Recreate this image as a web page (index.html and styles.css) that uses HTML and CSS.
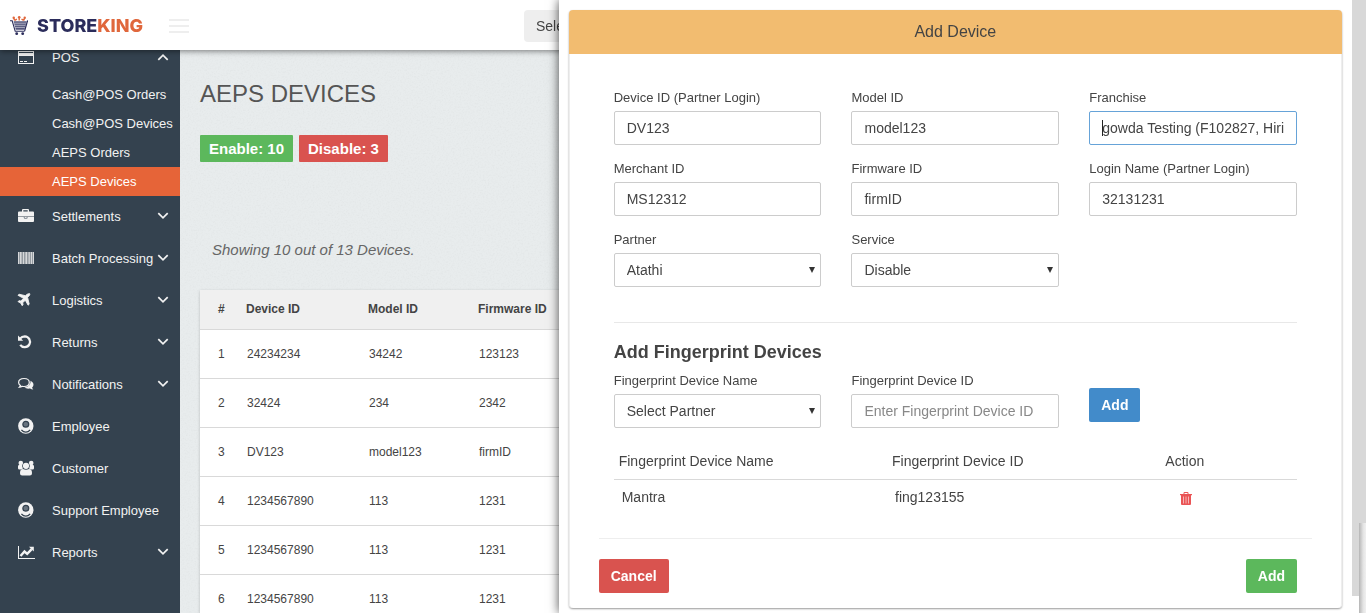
FILE: index.html
```html
<!DOCTYPE html>
<html lang="en">
<head>
<meta charset="utf-8">
<title>StoreKing - AEPS Devices</title>
<link rel="stylesheet" href="styles.css">
</head>
<body>
<svg class="sprite" aria-hidden="true">
  <symbol id="chevron" viewBox="0 0 12 8"><path d="M1.300 1.200L6 5.900l4.700-4.700" fill="none" stroke="currentColor" stroke-width="1.700"/></symbol>
  <symbol id="user" viewBox="0 0 16 16"><circle cx="7.800" cy="8" r="7.700"/><circle cx="7.800" cy="6.200" r="2.900" fill="#68737e" stroke="#34424f" stroke-width="1.300"/><path d="M3.400 11.800q1.900 2.300 4.400 2.300t4.400-2.300" fill="none" stroke="#34424f" stroke-width="1.300"/></symbol>
</svg>

<header class="topbar">
  <a class="brand" href="#" aria-label="StoreKing">
    <svg class="brand-cart" viewBox="0 0 18 20" aria-hidden="true">
      <path d="M4.700 4.600L3.700 2M4.700 4.400l2.200-1.200M9.200 4.400V1.500M13.700 4.600l1-2.600M13.700 4.400l-2.200-1.200" stroke="#e0673c" stroke-width="1.400"/>
      <circle cx="3.700" cy="1.800" r="1.200" fill="#e0673c"/><circle cx="9.200" cy="1.300" r="1.300" fill="#e0673c"/><circle cx="14.700" cy="1.800" r="1.200" fill="#e0673c"/>
      <path d="M0 4.800h2.200l3 10.500h9.500" fill="none" stroke="#2b2c5b" stroke-width="1.100"/>
      <path d="M3.600 5.300h13l-2.200 8.500H5.800z" fill="#55567c"/>
      <path d="M4 7.200h12.300M4.500 9.300h11.200M5 11.400h10.200" stroke="#c4c5d3" stroke-width=".8"/>
      <path d="M17.600 4.500l-3 10.500" stroke="#2b2c5b" stroke-width="1.200"/>
      <circle cx="6.700" cy="17.700" r="1.400" fill="#2b2c5b"/><circle cx="12.700" cy="17.700" r="1.400" fill="#2b2c5b"/>
    </svg>
    <span class="brand-name">STORE<span class="brand-accent">KING</span></span>
  </a>
  <button class="menu-toggle" type="button" aria-label="Toggle menu"><span></span><span></span><span></span></button>
  <button class="top-select" type="button">Select</button>
</header>

<nav class="sidebar">
  <ul class="nav">
    <li>
      <a class="nav-link" href="#"><svg class="nav-icon" viewBox="0 0 18 16"><path fill-rule="evenodd" d="M1 2h16v13H1zM2 3v1h14V3zM2 7v7h14V7zM3 12h3v1H3zM7 12h3v1H7z"/></svg><span>POS</span><svg class="nav-chevron open"><use href="#chevron"/></svg></a>
      <ul class="subnav">
        <li><a href="#">Cash@POS Orders</a></li>
        <li><a href="#">Cash@POS Devices</a></li>
        <li><a href="#">AEPS Orders</a></li>
        <li><a class="active" href="#">AEPS Devices</a></li>
      </ul>
    </li>
    <li><a class="nav-link" href="#"><svg class="nav-icon" viewBox="0 0 18 16"><path fill-rule="evenodd" d="M5 3.500V2q0-1 1-1h5q1 0 1 1v1.500h4q1 0 1 1V8H1V4.500q0-1 1-1zM6.300 3.500h4.400V2.200H6.300z"/><path d="M1 8.500h16V13q0 1-1 1H2q-1 0-1-1z"/><path d="M7.200 8.200v1q0 1.300 1.500 1.300t1.500-1.300v-1" fill="none" stroke="#8d959d" stroke-width="1.200"/></svg><span>Settlements</span><svg class="nav-chevron"><use href="#chevron"/></svg></a></li>
    <li><a class="nav-link" href="#"><svg class="nav-icon" viewBox="0 0 18 16"><path d="M1 2h16v12H1z" fill-opacity=".5"/><path d="M1 2h1v12H1zM3 2h1.500v12H3zM6 2h1v12H6zM8.500 2H10v12H8.500zM11.600 2h1.200v12h-1.200zM14 2h1v12h-1zM16 2h1v12h-1z" fill-opacity=".7"/></svg><span>Batch Processing</span><svg class="nav-chevron"><use href="#chevron"/></svg></a></li>
    <li><a class="nav-link" href="#"><svg class="nav-icon" viewBox="0 0 18 16"><path d="M11.500 1.800c.8-.5 1.500-.4 1.300.6-.2.900-.7 1.500-2.200 3l1.600 6.800-1.100 1L8.300 8.200 5.700 10.800l.3 2-.8.900-1.500-2.600L1 9.600l.9-.9 2 .3 2.600-2.700L1 3.300l1-1.100 6.400 1.500C9.900 2.300 10.700 1.900 11.500 1.800z" stroke="currentColor" stroke-width=".9"/></svg><span>Logistics</span><svg class="nav-chevron"><use href="#chevron"/></svg></a></li>
    <li><a class="nav-link" href="#"><svg class="nav-icon" viewBox="0 0 18 16"><path d="M1 1.500v5.200h5.200z"/><path d="M3 4.600C4.300 3 6 2.400 7.800 2.400a5.400 5.400 0 1 1-4.600 8.500" fill="none" stroke="currentColor" stroke-width="2.200"/></svg><span>Returns</span><svg class="nav-chevron"><use href="#chevron"/></svg></a></li>
    <li><a class="nav-link" href="#"><svg class="nav-icon" viewBox="0 0 18 16"><path d="M7 2.500c3.200 0 5.300 1.700 5.300 4s-2.100 4-5.300 4c-.7 0-1.300-.1-1.900-.3-.9.700-1.700.9-2.700 1 .5-.5.800-1 1-1.700C2.200 8.700 1.600 7.600 1.600 6.500c0-2.300 2.200-4 5.400-4z" fill="none" stroke="currentColor" stroke-width="1.200"/><path d="M13.400 4.800c3.500 1.500 4 4.800 1.700 6.700.1.800.5 1.500 1.200 2-1.300 0-2.400-.3-3.200-1-2.400.4-4.300 0-5.600-1 4.200-.5 6.500-3 5.900-6.700z"/></svg><span>Notifications</span><svg class="nav-chevron"><use href="#chevron"/></svg></a></li>
    <li><a class="nav-link" href="#"><svg class="nav-icon"><use href="#user"/></svg><span>Employee</span></a></li>
    <li><a class="nav-link" href="#"><svg class="nav-icon" viewBox="0 0 18 16"><circle cx="3.800" cy="3" r="2.300"/><circle cx="14.200" cy="3" r="2.300"/><path d="M1 6.300q0-1.500 1.500-1.500h2.700q-.3 2.500 1 3.800-1 .1-1.900 1H2.500Q1 9.600 1 8.200zM17 6.300q0-1.500-1.500-1.500h-2.700q.3 2.500-1 3.800 1 .1 1.900 1h1.800q1.500 0 1.500-1.400z"/><circle cx="9" cy="5.800" r="3.100"/><path d="M3 13c0-2.500 1-4 3-4 2 1.100 4 1.100 6 0 2 0 3 1.500 3 4 0 1.700-.8 2.500-2.200 2.500H5.200C3.800 15.500 3 14.700 3 13z"/></svg><span>Customer</span></a></li>
    <li><a class="nav-link" href="#"><svg class="nav-icon"><use href="#user"/></svg><span>Support Employee</span></a></li>
    <li><a class="nav-link" href="#"><svg class="nav-icon" viewBox="0 0 18 16"><path d="M1 2h1v12h16v1H1z"/><path d="M3.500 12L7.500 7.500l2.700 2.400 4.500-4.800" fill="none" stroke="currentColor" stroke-width="2.400"/><path d="M12 2.700h4.800v4.800z"/></svg><span>Reports</span><svg class="nav-chevron"><use href="#chevron"/></svg></a></li>
  </ul>
</nav>

<main class="page">
  <h1>AEPS DEVICES</h1>
  <div class="badges"><span class="badge green">Enable: 10</span><span class="badge red">Disable: 3</span></div>
  <p class="summary">Showing 10 out of 13 Devices.</p>
  <table class="devices">
    <colgroup><col class="c-num"><col class="c-device"><col class="c-model"><col></colgroup>
    <thead><tr><th>#</th><th>Device ID</th><th>Model ID</th><th>Firmware ID</th></tr></thead>
    <tbody>
      <tr><td>1</td><td>24234234</td><td>34242</td><td>123123</td></tr>
      <tr><td>2</td><td>32424</td><td>234</td><td>2342</td></tr>
      <tr><td>3</td><td>DV123</td><td>model123</td><td>firmID</td></tr>
      <tr><td>4</td><td>1234567890</td><td>113</td><td>1231</td></tr>
      <tr><td>5</td><td>1234567890</td><td>113</td><td>1231</td></tr>
      <tr><td>6</td><td>1234567890</td><td>113</td><td>1231</td></tr>
    </tbody>
  </table>
</main>

<aside class="drawer">
  <form class="card">
    <h2 class="card-title">Add Device</h2>
    <div class="card-body">
      <div class="fields">
        <div class="field"><label for="device">Device ID (Partner Login)</label><input id="device" type="text" value="DV123"></div>
        <div class="field"><label for="model">Model ID</label><input id="model" type="text" value="model123"></div>
        <div class="field"><label for="franchise">Franchise</label><div class="control caret"><input id="franchise" class="focused" type="text" value="gowda Testing (F102827, Hiri"></div></div>
        <div class="field"><label for="merchant">Merchant ID</label><input id="merchant" type="text" value="MS12312"></div>
        <div class="field"><label for="firmware">Firmware ID</label><input id="firmware" type="text" value="firmID"></div>
        <div class="field"><label for="login">Login Name (Partner Login)</label><input id="login" type="text" value="32131231"></div>
        <div class="field"><label for="partner">Partner</label><div class="control arrow"><select id="partner"><option>Atathi</option></select></div></div>
        <div class="field"><label for="service">Service</label><div class="control arrow"><select id="service"><option>Disable</option></select></div></div>
      </div>
      <hr>
      <h3>Add Fingerprint Devices</h3>
      <div class="fields">
        <div class="field"><label for="fp-name">Fingerprint Device Name</label><div class="control arrow"><select id="fp-name"><option>Select Partner</option></select></div></div>
        <div class="field"><label for="fp-id">Fingerprint Device ID</label><input id="fp-id" type="text" placeholder="Enter Fingerprint Device ID"></div>
        <div class="field-action"><button class="btn blue" type="button">Add</button></div>
      </div>
      <table class="prints">
        <thead><tr><th>Fingerprint Device Name</th><th>Fingerprint Device ID</th><th>Action</th></tr></thead>
        <tbody><tr><td>Mantra</td><td>fing123155</td><td class="action"><button class="trash" type="button" aria-label="Delete"><svg viewBox="0 0 12 13"><path fill-rule="evenodd" d="M3.500 2V1.200Q3.500 0 4.700 0h2.600q1.200 0 1.200 1.200V2H12v1.300h-1V12q0 1-1 1H2q-1 0-1-1V3.300H0V2zM4.500 2h3V1h-3z"/><path d="M3.500 4.500v7M6 4.500v7M8.500 4.500v7" stroke="#f7b5b6"/></svg></button></td></tr></tbody>
      </table>
    </div>
    <footer class="card-footer"><button class="btn red" type="button">Cancel</button><button class="btn green" type="submit">Add</button></footer>
  </form>
  <div class="track"></div>
  <div class="edge"></div>
</aside>
</body>
</html>
```
FILE: styles.css
```css
* { box-sizing: border-box; }

body {
  margin: 0;
  height: 100vh;
  overflow: hidden;
  color: #444;
  font: 13px/18px "Liberation Sans", Arial, sans-serif;
  background: #e8eced url("data:image/svg+xml,%3Csvg xmlns='http://www.w3.org/2000/svg' width='200' height='200'%3E%3Cfilter id='n'%3E%3CfeTurbulence type='fractalNoise' baseFrequency='.6' numOctaves='2' stitchTiles='stitch'/%3E%3CfeColorMatrix values='0 0 0 0 .4 0 0 0 0 .4 0 0 0 0 .4 .2 0 0 0 -.09'/%3E%3C/filter%3E%3Crect width='200' height='200' filter='url(%23n)'/%3E%3C/svg%3E");
}

h1, h2, h3, p, ul { margin: 0; padding: 0; }
ul { list-style: none; }
a { color: inherit; text-decoration: none; }
button, input, select { font: inherit; color: inherit; }
.sprite { display: none; }

/* Top bar */
.topbar {
  position: fixed;
  z-index: 2;
  top: 0;
  left: 0;
  right: 0;
  display: flex;
  align-items: center;
  height: 50px;
  padding: 2px 0 0 10px;
  background: #fff;
  box-shadow: 0 1px 6px rgba(0, 0, 0, .5);
}
.brand { display: flex; align-items: center; gap: 9px; width: 159px; }
.brand-cart { width: 18px; height: 20px; }
.brand-name { color: #2b2c5b; font: 800 18px/24px Inter, sans-serif; }
.brand-accent { color: #e0673c; }
.menu-toggle {
  display: grid;
  gap: 4px;
  width: 20px;
  padding: 0;
  border: 0;
  background: none;
}
.menu-toggle span { height: 2px; background: #eee; }
.top-select {
  width: 200px;
  height: 32px;
  margin-left: 335px;
  padding: 0 12px;
  border: 0;
  border-radius: 4px;
  background: #eee;
  font-size: 14px;
  text-align: left;
}

/* Sidebar */
.sidebar {
  position: fixed;
  top: 0;
  bottom: 0;
  left: 0;
  width: 180px;
  padding-top: 37px;
  overflow: hidden;
  background: #34424f;
  color: #f2f2f2;
}
.nav-link { display: flex; align-items: center; height: 42px; padding: 0 11px 0 17px; }
.nav-link span { flex: 1; white-space: nowrap; }
.nav-icon { width: 18px; height: 16px; margin: 0 17px 2px 0; fill: currentColor; }
.nav-chevron { width: 12px; height: 8px; margin-bottom: 2px; }
.nav-chevron.open { transform: rotate(180deg); }
.subnav { padding-top: 1px; }
.subnav a { display: block; padding-left: 52px; line-height: 29px; }
.subnav .active { background: #e66438; color: #fff; }

/* Page */
.page { margin-left: 180px; padding: 78px 20px 0; }
h1 { font-size: 24px; font-weight: 400; line-height: 32px; color: #555; }
.badges { display: flex; gap: 6px; padding-top: 25px; }
.badge {
  padding: 0 9px;
  border-radius: 1px;
  color: #fff;
  font-size: 15px;
  font-weight: 700;
  line-height: 27px;
}
.green { background: #5cb85c; }
.red { background: #d9534f; }
.blue { background: #428bca; }
.summary { margin: 78px 12px 30px; font-size: 15px; font-style: italic; line-height: 20px; color: #666; }
.devices {
  width: 100%;
  table-layout: fixed;
  border-collapse: collapse;
  background: #fff;
  font-size: 12px;
  box-shadow: 0 1px 3px rgba(0, 0, 0, .2);
}
.c-num { width: 38px; }
.c-device { width: 122px; }
.c-model { width: 110px; }
.devices th, .devices td { padding: 0 8px; border-bottom: 1px solid #d9d9d9; text-align: left; }
.devices th { height: 39px; background: #f0f0f0; }
.devices td { height: 49px; padding-left: 9px; }
.devices th:first-child, .devices td:first-child { padding-left: 18px; padding-right: 0; }

/* Drawer */
.drawer {
  position: fixed;
  z-index: 3;
  top: 0;
  right: 0;
  bottom: 0;
  display: flex;
  width: 59.1%;
  background: #fff;
  box-shadow: 0 0 10px rgba(0, 0, 0, .7);
}
.card {
  flex: 1;
  align-self: flex-start;
  margin: 10px;
  border-radius: 4px;
  box-shadow: inset 1px 0 #eee, inset -1px 0 #eee, 0 1px 2px rgba(0, 0, 0, .4);
}
.card-title {
  border-radius: 4px 4px 0 0;
  background: #f2bc70;
  font-size: 16px;
  font-weight: 400;
  line-height: 44px;
  text-align: center;
}
.card-body { padding: 35px 45px 24px; }
.fields { display: grid; grid-template-columns: repeat(3, 1fr); gap: 15px 30px; }
.field { display: grid; gap: 4px; min-width: 0; }
.field input, .field select {
  width: 100%;
  min-width: 0;
  height: 34px;
  padding: 0 12px;
  border: 1px solid #ccc;
  border-radius: 2px;
  background: #fff;
  font-size: 14px;
  appearance: none;
}
.field input::placeholder { color: #888; }
.field .focused { border-color: #66a3d8; }
.control { display: grid; align-items: center; }
.control > *, .control::after { grid-area: 1 / 1; }
.control::after { content: ""; z-index: 1; pointer-events: none; }
.arrow::after {
  justify-self: end;
  margin-right: 6px;
  border: solid transparent;
  border-width: 6px 3px 0;
  border-top-color: #333;
}
.caret::after { width: 1px; height: 16px; margin-left: 13px; background: #222; }
hr { height: 1px; margin: 35px 0 19px; border: 0; background: #e8e8e8; }
h3 { margin-bottom: 10px; font-size: 18px; line-height: 20px; }
.field-action { padding-top: 16px; }
.btn {
  height: 34px;
  padding: 0 12px;
  border: 0;
  border-radius: 2px;
  color: #fff;
  font-size: 14px;
  font-weight: 700;
}
.prints {
  width: 100%;
  margin-top: 15px;
  table-layout: fixed;
  border-collapse: collapse;
  font-size: 14px;
}
.prints th { width: 40%; height: 36px; padding: 0 5px; border-bottom: 1px solid #d9d9d9; font-weight: 400; text-align: left; }
.prints th:last-child { width: 20%; }
.prints td { height: 35px; padding: 0 8px; }
.prints .action { padding: 4px 20px 0; }
.trash { display: block; padding: 0; border: 0; background: none; }
.trash svg { display: block; width: 12px; height: 13px; fill: #ea5455; }
.card-footer {
  display: flex;
  justify-content: space-between;
  margin: 0 30px;
  padding: 20px 15px 15px 0;
  border-top: 1px solid #eee;
}
.track { width: 14px; margin-bottom: 17px; background: #d8d8d8; }
.edge {
  position: absolute;
  right: 0;
  bottom: 0;
  width: 7px;
  height: 90px;
  background: linear-gradient(to right, #b5b5b5, #e4e4e4 60%, #f0f0f0);
}
```
